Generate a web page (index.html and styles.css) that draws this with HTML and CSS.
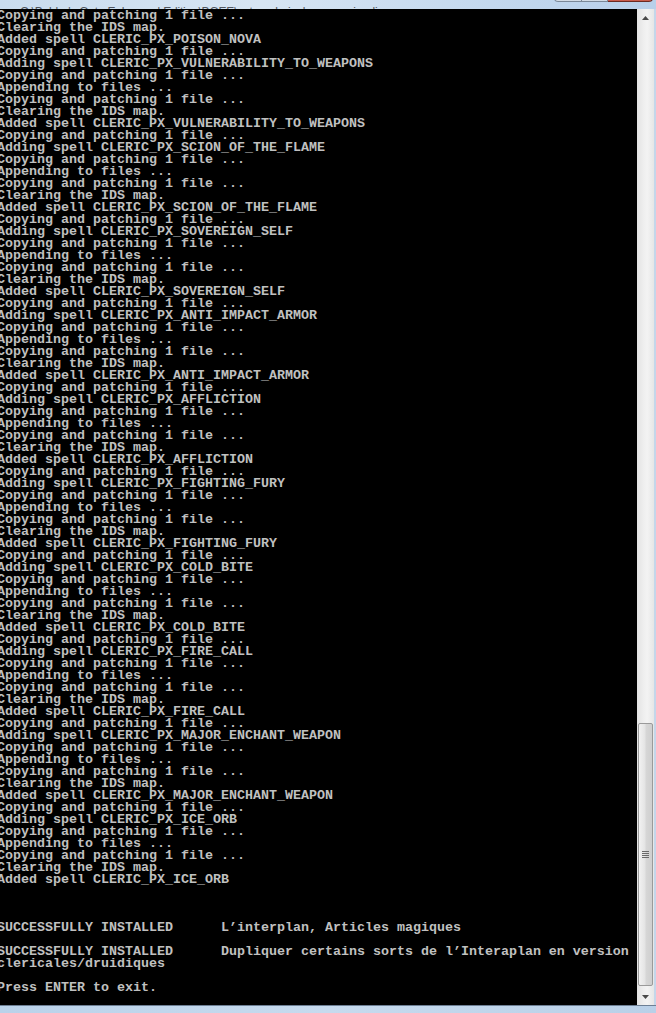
FILE: index.html
```html
<!DOCTYPE html>
<html>
<head>
<meta charset="utf-8">
<title>Console</title>
<link rel="stylesheet" href="styles.css">
</head>
<body>
<div class="window">
  <div class="titlebar">
    <span class="title-text">C:\Baldur's Gate Enhanced Edition\BGEE\setup-clericale_magasin_diene.exe</span>
    <div class="caption-buttons">
      <span class="cbtn min"></span>
      <span class="cbtn max"></span>
      <span class="cbtn close"></span>
    </div>
  </div>
  <div class="main">
    <div class="console">
<pre class="console-text">Copying and patching 1 file ...
Clearing the IDS map.
Added spell CLERIC_PX_POISON_NOVA
Copying and patching 1 file ...
Adding spell CLERIC_PX_VULNERABILITY_TO_WEAPONS
Copying and patching 1 file ...
Appending to files ...
Copying and patching 1 file ...
Clearing the IDS map.
Added spell CLERIC_PX_VULNERABILITY_TO_WEAPONS
Copying and patching 1 file ...
Adding spell CLERIC_PX_SCION_OF_THE_FLAME
Copying and patching 1 file ...
Appending to files ...
Copying and patching 1 file ...
Clearing the IDS map.
Added spell CLERIC_PX_SCION_OF_THE_FLAME
Copying and patching 1 file ...
Adding spell CLERIC_PX_SOVEREIGN_SELF
Copying and patching 1 file ...
Appending to files ...
Copying and patching 1 file ...
Clearing the IDS map.
Added spell CLERIC_PX_SOVEREIGN_SELF
Copying and patching 1 file ...
Adding spell CLERIC_PX_ANTI_IMPACT_ARMOR
Copying and patching 1 file ...
Appending to files ...
Copying and patching 1 file ...
Clearing the IDS map.
Added spell CLERIC_PX_ANTI_IMPACT_ARMOR
Copying and patching 1 file ...
Adding spell CLERIC_PX_AFFLICTION
Copying and patching 1 file ...
Appending to files ...
Copying and patching 1 file ...
Clearing the IDS map.
Added spell CLERIC_PX_AFFLICTION
Copying and patching 1 file ...
Adding spell CLERIC_PX_FIGHTING_FURY
Copying and patching 1 file ...
Appending to files ...
Copying and patching 1 file ...
Clearing the IDS map.
Added spell CLERIC_PX_FIGHTING_FURY
Copying and patching 1 file ...
Adding spell CLERIC_PX_COLD_BITE
Copying and patching 1 file ...
Appending to files ...
Copying and patching 1 file ...
Clearing the IDS map.
Added spell CLERIC_PX_COLD_BITE
Copying and patching 1 file ...
Adding spell CLERIC_PX_FIRE_CALL
Copying and patching 1 file ...
Appending to files ...
Copying and patching 1 file ...
Clearing the IDS map.
Added spell CLERIC_PX_FIRE_CALL
Copying and patching 1 file ...
Adding spell CLERIC_PX_MAJOR_ENCHANT_WEAPON
Copying and patching 1 file ...
Appending to files ...
Copying and patching 1 file ...
Clearing the IDS map.
Added spell CLERIC_PX_MAJOR_ENCHANT_WEAPON
Copying and patching 1 file ...
Adding spell CLERIC_PX_ICE_ORB
Copying and patching 1 file ...
Appending to files ...
Copying and patching 1 file ...
Clearing the IDS map.
Added spell CLERIC_PX_ICE_ORB



SUCCESSFULLY INSTALLED      L’interplan, Articles magiques

SUCCESSFULLY INSTALLED      Dupliquer certains sorts de l’Interaplan en version
clericales/druidiques

Press ENTER to exit.</pre>
    </div>
    <div class="scrollbar">
      <div class="sb-btn"><svg width="7" height="4" viewBox="0 0 7 4"><path d="M0 4 L3.5 0 L7 4 Z" fill="#4a4a4a"/></svg></div>
      <div class="sb-track">
        <div class="sb-thumb">
          <svg width="7" height="7" viewBox="0 0 7 7"><path d="M0 0.5H7M0 2.5H7M0 4.5H7M0 6.5H7" stroke="#6a6a6a" stroke-width="1"/></svg>
        </div>
      </div>
      <div class="sb-btn"><svg width="7" height="4" viewBox="0 0 7 4"><path d="M0 0 L7 0 L3.5 4 Z" fill="#4a4a4a"/></svg></div>
    </div>
    <div class="frame-right"></div>
  </div>
  <div class="frame-bottom"></div>
</div>
</body>
</html>
```
FILE: styles.css
```css
html, body {
  margin: 0;
  padding: 0;
  background: #bcd3ea;
}
.window {
  width: 656px;
  height: 1013px;
  display: flex;
  flex-direction: column;
  overflow: hidden;
}
.titlebar {
  height: 9px;
  flex: none;
  display: flex;
  align-items: flex-end;
  background: linear-gradient(90deg, #c9dcef 0%, #d7e5f3 40%, #c3d8ee 75%, #b8d0ea 100%);
  overflow: hidden;
}
.title-text {
  font-family: "Liberation Sans", sans-serif;
  font-size: 12px;
  line-height: 12px;
  color: #3a3f47;
  margin-left: 20px;
  margin-bottom: -9px;
  white-space: nowrap;
  letter-spacing: -0.2px;
  opacity: 0.85;
}
.caption-buttons {
  margin-left: auto;
  margin-right: 3px;
  display: flex;
  align-self: flex-start;
  margin-top: -16px;
}
.cbtn {
  display: block;
  height: 17px;
  border: 1px solid #7a8898;
  border-top: 0;
  background: linear-gradient(180deg, #e9eef4, #d2dbe5);
}
.cbtn.min {
  width: 26px;
  border-radius: 0 0 0 4px;
}
.cbtn.max {
  width: 25px;
  border-left: 0;
}
.cbtn.close {
  width: 44px;
  border-left: 0;
  border-color: #6c2a22;
  border-radius: 0 0 4px 0;
  background: linear-gradient(180deg, #e4a291, #c75a4a);
}
.main {
  flex: none;
  height: 996px;
  display: flex;
}
.console {
  flex: none;
  width: 637px;
  height: 996px;
  background: #000;
  overflow: hidden;
}
.console-text {
  margin: 0 0 0 -3px;
  padding: 1px 0 0 0;
  color: #c0c0c0;
  font-family: "Liberation Mono", "DejaVu Sans Mono", monospace;
  font-weight: bold;
  font-size: 13.33px;
  line-height: 12px;
  white-space: pre;
}
.scrollbar {
  flex: none;
  width: 17px;
  display: flex;
  flex-direction: column;
  background: linear-gradient(90deg, #e3e3e3, #efefef 40%, #f3f3f3 60%, #e6e6e6);
}
.sb-btn {
  height: 17px;
  flex: none;
  display: flex;
  align-items: center;
  justify-content: center;
}
.sb-track {
  flex: 1;
  display: flex;
  flex-direction: column;
}
.sb-thumb {
  margin-top: 697px;
  margin-left: 1px;
  width: 13px;
  height: 261px;
  border: 1px solid #9a9a9a;
  border-radius: 2px;
  background: linear-gradient(90deg, #f2f2f2, #e4e4e4 45%, #d6d6d6 55%, #cfcfcf);
  display: flex;
  align-items: center;
  justify-content: center;
}
.frame-right {
  flex: none;
  width: 2px;
  background: #c4d6ea;
}
.frame-bottom {
  flex: none;
  height: 8px;
  border-top: 1px solid #6d7f94;
  background: linear-gradient(90deg, #bad2ea, #c6daee 50%, #b9d0e8);
}
```
